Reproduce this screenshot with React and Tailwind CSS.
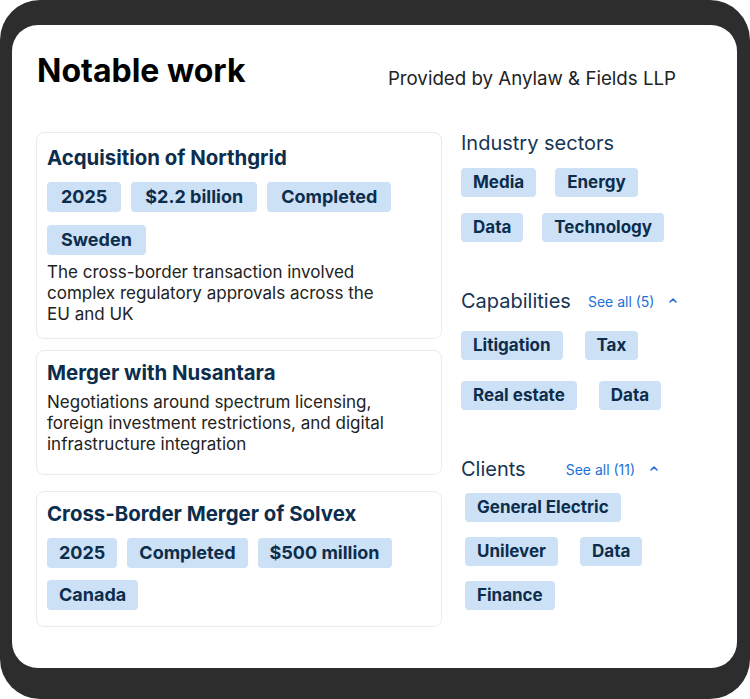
const work = [
  {
    title: "Acquisition of Northgrid",
    tags: ["2025", "$2.2 billion", "Completed", "Sweden"],
    text: "The cross-border transaction involved complex regulatory approvals across the EU and UK",
    box: "mb-[11px] pt-[11px] pb-[13px]",
    tagTop: "mt-[10px] gap-y-[13px]",
    pad: "px-[14px]",
  },
  {
    title: "Merger with Nusantara",
    tags: [],
    text: "Negotiations around spectrum licensing, foreign investment restrictions, and digital infrastructure integration",
    box: "mb-[16px] pt-[8px] pb-[19px]",
  },
  {
    title: "Cross-Border Merger of Solvex",
    tags: ["2025", "Completed", "$500 million", "Canada"],
    text: "",
    box: "pt-[8px] pb-[16px]",
    tagTop: "mt-[10px] gap-y-[12px]",
    pad: "px-[12px]",
  },
];

function Tag({ children, big, pad = "px-[12px]" }) {
  return (
    <span
      className={
        "rounded-[4px] bg-[#cde1f6] font-bold text-[#0c2d4c] " +
        pad +
        (big ? " text-[18px] leading-[30px]" : " text-[17px] leading-[29px]")
      }
    >
      {children}
    </span>
  );
}

function Chevron() {
  return (
    <svg width="10" height="7" viewBox="0 0 10 7" fill="none" stroke="#2370d6" strokeWidth="1.6" strokeLinecap="round" strokeLinejoin="round">
      <path d="M2 5 L5 2 L8 5" />
    </svg>
  );
}

function Section({ title, more, moreGap, gapY, indent = "", items, className }) {
  return (
    <div className={className}>
      <div className="flex items-center">
        <h3 className="text-[20px] font-normal leading-[28px] text-[#163453]">{title}</h3>
        {more && (
          <>
            <span className={"text-[14px] text-[#2370d6] " + moreGap}>{more}</span>
            <span className="ml-[14px] mt-[-2px]">
              <Chevron />
            </span>
          </>
        )}
      </div>
      <div className={"flex w-[240px] flex-wrap " + gapY + " " + indent}>
        {items.map((t) => (
          <Tag key={t}>{t}</Tag>
        ))}
      </div>
    </div>
  );
}

export default function App() {
  return (
    <div className="min-h-screen bg-white" style={{ fontFamily: "Inter, 'Liberation Sans', sans-serif" }}>
      <div className="h-[699px] rounded-[40px] bg-[#2d2d2d] pb-[31px] pl-[12px] pr-[13px] pt-[25px]">
        <div className="h-full rounded-[26px] bg-white px-[24px] pt-[26px]">
          <div className="flex items-start justify-between pl-[1px] pr-[37px]">
            <h1 className="text-[32px] font-bold leading-[40px] text-black">Notable work</h1>
            <p className="mt-[16px] text-[18.7px] leading-[24px] text-[#222]">Provided by Anylaw &amp; Fields LLP</p>
          </div>

          <div className="mt-[41px] flex gap-[19px]">
            <div className="w-[406px] shrink-0">
              {work.map((w) => (
                <div key={w.title} className={"rounded-[8px] border border-[#ebebeb] px-[10px] " + w.box}>
                  <h2 className="text-[20.4px] font-bold leading-[28px] text-[#0c2d4c]">{w.title}</h2>
                  {w.tags.length > 0 && (
                    <div className={"flex flex-wrap gap-x-[10px] " + w.tagTop}>
                      {w.tags.map((t) => (
                        <Tag key={t} big pad={w.pad}>
                          {t}
                        </Tag>
                      ))}
                    </div>
                  )}
                  {w.text && (
                    <p className={"pr-[40px] text-[17px] leading-[21px] text-[#222] " + (w.tags.length ? "mt-[7px]" : "mt-[5px]")}>
                      {w.text}
                    </p>
                  )}
                </div>
              ))}
            </div>

            <div className="flex-1">
              <Section
                title="Industry sectors"
                items={["Media", "Energy", "Data", "Technology"]}
                gapY="mt-[11px] gap-x-[19px] gap-y-[16px]"
                className="-mt-[3px]"
              />
              <Section
                title="Capabilities"
                more="See all (5)"
                moreGap="ml-[17px]"
                items={["Litigation", "Tax", "Real estate", "Data"]}
                gapY="mt-[16px] gap-x-[22px] gap-y-[21px]"
                className="mt-[45px]"
              />
              <Section
                title="Clients"
                more="See all (11)"
                moreGap="ml-[40px]"
                items={["General Electric", "Unilever", "Data", "Finance"]}
                gapY="mt-[10px] gap-x-[22px] gap-y-[15px]"
                indent="pl-[4px]"
                className="mt-[45px]"
              />
            </div>
          </div>
        </div>
      </div>
    </div>
  );
}
